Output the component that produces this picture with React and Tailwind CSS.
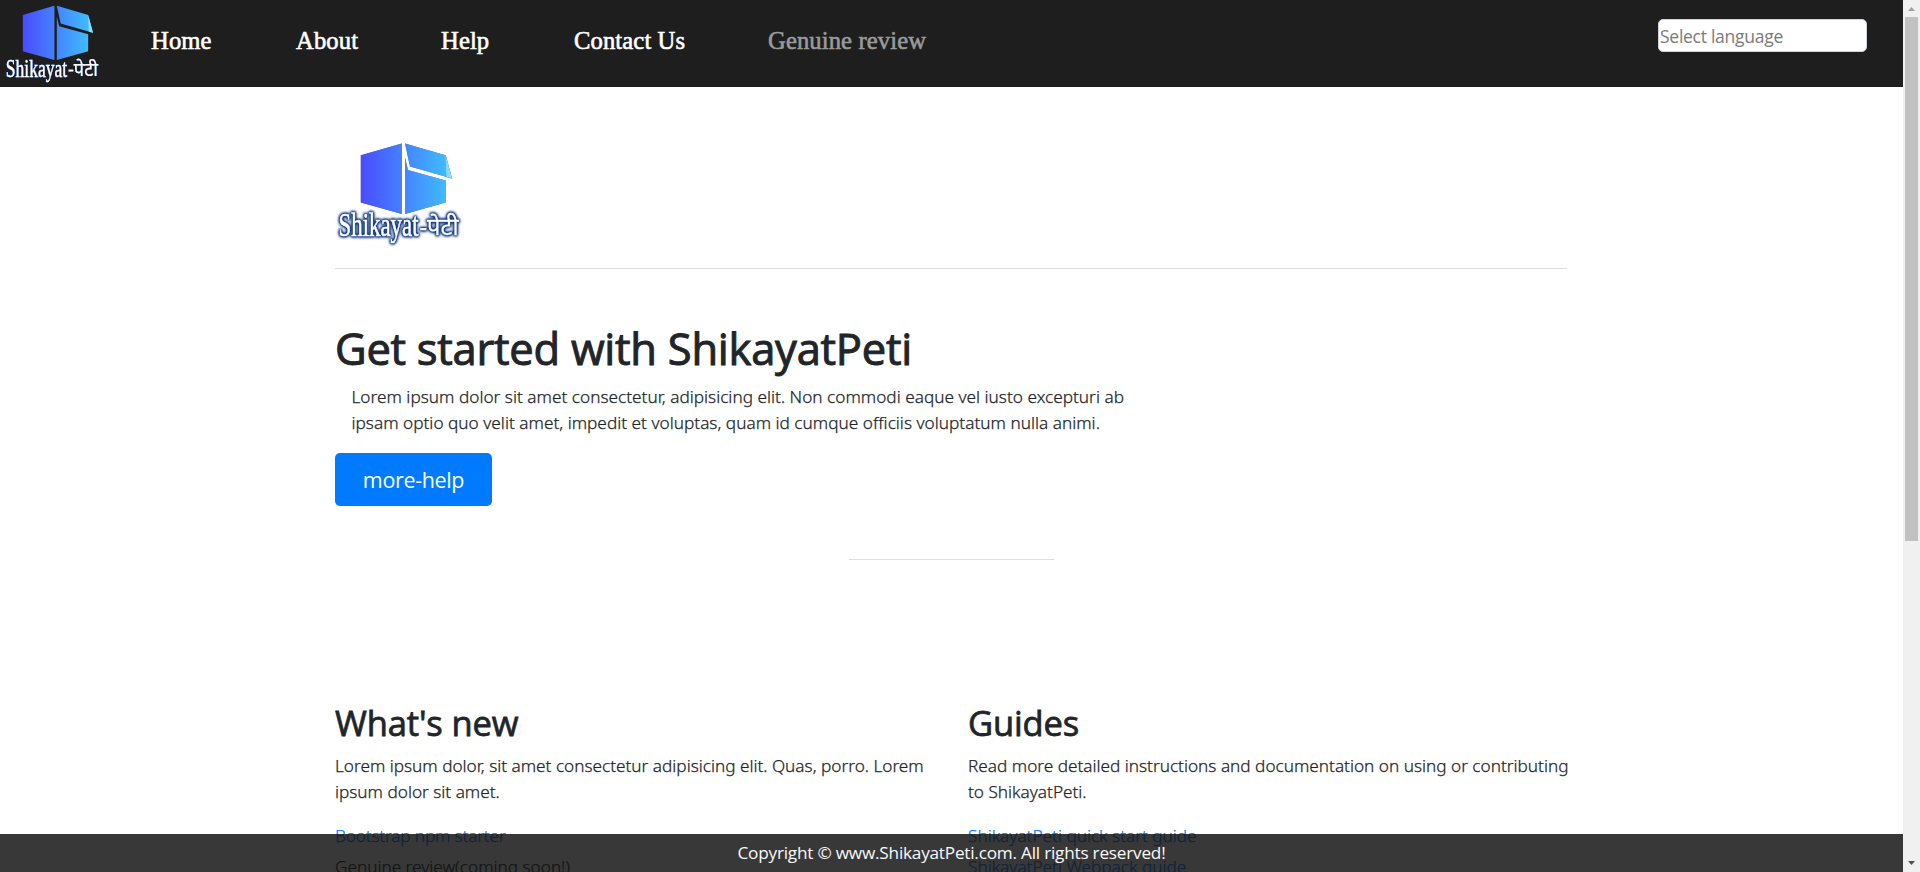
function Logo({ className, uid }) {
  return (
    <svg className={className} viewBox="0 0 130 110">
      <defs>
        <linearGradient id={uid} gradientUnits="userSpaceOnUse" x1="26" y1="0" x2="112" y2="0">
          <stop offset="0" stopColor="#4a4bff" />
          <stop offset="1" stopColor="#3fbcff" />
        </linearGradient>
      </defs>
      <g fill={`url(#${uid})`} className="[filter:drop-shadow(0_0_0.5px_rgba(60,60,60,0.7))]">
        <path d="M25.8 15.2 66.8 3.4V74L25.8 62.6Z" />
        <path d="M70 3.4 110.7 15.2 117 38.5 75 26.5Z" />
        <path d="M70 17.5 73 30 110.7 40.5V62.6L70 74Z" />
        <path d="M110.7 15.2 117 38.5 111.5 37Z" fill="#86dcff" />
      </g>
      <g
        fill="#fff"
        stroke="#fff"
        className="[filter:drop-shadow(0_0_0.8px_#0b2f78)_drop-shadow(0_0_0.8px_#0b2f78)_drop-shadow(0_0_1px_#0d3b86)]"
      >
        <text x="3.5" y="95.5" fontSize="33" strokeWidth="0.6" fontFamily="Liberation Serif, serif" textLength="80" lengthAdjust="spacingAndGlyphs">Shikayat</text>
        <text x="84.5" y="95" fontSize="24" strokeWidth="0.3" fontFamily="Noto Sans, sans-serif" textLength="39" lengthAdjust="spacingAndGlyphs">-पेटी</text>
      </g>
    </svg>
  );
}

function NavItem({ className, children }) {
  return (
    <a className={`shrink-0 whitespace-nowrap font-['Liberation_Serif',serif] text-[24.6px] leading-[30px] tracking-[0.12px] [-webkit-text-stroke:0.6px_currentColor] ${className}`}>
      {children}
    </a>
  );
}

function Navbar() {
  return (
    <header className="flex h-[87px] w-full items-start bg-[#1e1e1e] text-white">
      <Logo uid="navLogo" className="mt-[2.6px] ml-[3px] h-[85px] w-[100px] shrink-0" />
      <nav className="ml-[48px] flex pt-[26px]">
        <NavItem className="w-[145px]">Home</NavItem>
        <NavItem className="w-[145px]">About</NavItem>
        <NavItem className="w-[133px]">Help</NavItem>
        <NavItem className="w-[194px]">Contact Us</NavItem>
        <NavItem className="text-[#9a9a9a]">Genuine review</NavItem>
      </nav>
      <input
        placeholder="Select language"
        className="mt-[19px] mr-[36px] ml-auto h-[33px] w-[209px] rounded-[5px] border border-[#ced4da] bg-white px-px pt-px text-[17.5px] tracking-[-0.27px] placeholder:text-[#7b7b7b]"
      />
    </header>
  );
}

const BODY = "font-['Noto_Sans',sans-serif] text-[17.2px] leading-[26px] font-light [-webkit-text-stroke:0.25px_currentColor]";

function Guide({ className, title, lines, links }) {
  return (
    <section className={`shrink-0 whitespace-nowrap ${className}`}>
      <h2 className="-mt-px text-[34.5px] leading-[42px] tracking-[-0.15px] [-webkit-text-stroke:0.8px_currentColor]">{title}</h2>
      <div className={`mt-[9px] ${BODY}`}>
        {lines.map((line) => (
          <p key={line}>{line}</p>
        ))}
      </div>
      <ul className={`mt-[18px] flex flex-col gap-[5px] ${BODY}`}>
        {links.map((link) => (
          <li key={link.label} className={link.color}>
            {link.label}
          </li>
        ))}
      </ul>
    </section>
  );
}

function Scrollbar() {
  return (
    <div className="flex h-full w-[17px] shrink-0 flex-col items-center bg-[#f0f0f0]">
      <svg className="h-[17px] w-[17px] shrink-0" viewBox="0 0 17 17">
        <path d="M5 11 8.5 7 12 11Z" fill="#a0a0a0" />
      </svg>
      <div className="h-[524px] w-[13px] bg-[#c1c1c1]" />
      <svg className="mt-auto h-[17px] w-[17px] shrink-0" viewBox="0 0 17 17">
        <path d="M5 6H12L8.5 10Z" fill="#505050" />
      </svg>
    </div>
  );
}

export default function App() {
  return (
    <div className="flex h-[872px] w-full overflow-hidden bg-white font-['Open_Sans',sans-serif] text-[#212529]">
      <div className="relative h-full min-w-0 flex-1 overflow-hidden">
        <Navbar />
        <main className="ml-[335px] w-[1232px] pt-[53px]">
          <div className="h-[129px] border-b border-[#dcdfe2]">
            <Logo uid="pageLogo" className="h-[110px] w-[130px]" />
          </div>
          <h1 className="mt-[54px] text-[43.5px] leading-[52px] tracking-[-0.25px] whitespace-nowrap [-webkit-text-stroke:1px_currentColor]">
            Get started with ShikayatPeti
          </h1>
          <p className={`mt-[9px] ml-[16.5px] tracking-[0.02px] whitespace-nowrap ${BODY}`}>
            Lorem ipsum dolor sit amet consectetur, adipisicing elit. Non commodi eaque vel iusto excepturi ab
            <br />
            ipsam optio quo velit amet, impedit et voluptas, quam id cumque officiis voluptatum nulla animi.
          </p>
          <button className="mt-[17px] flex h-[53px] w-[157px] items-center justify-center rounded-[5px] bg-[#007bff] pt-[2px] text-[21.5px] tracking-[-0.35px] text-white">
            more-help
          </button>
          <hr className="mx-auto mt-[53px] w-[205px] border-[#dcdfe2]" />
          <div className="mt-[143px] flex">
            <Guide
              className="w-[633px]"
              title="What's new"
              lines={["Lorem ipsum dolor, sit amet consectetur adipisicing elit. Quas, porro. Lorem", "ipsum dolor sit amet."]}
              links={[
                { label: "Bootstrap npm starter", color: "text-[#007bff] tracking-[-0.15px]" },
                { label: "Genuine review(coming soon!)", color: "text-[#212529]" },
              ]}
            />
            <Guide
              className="w-[599px]"
              title="Guides"
              lines={["Read more detailed instructions and documentation on using or contributing", "to ShikayatPeti."]}
              links={[
                { label: "ShikayatPeti quick start guide", color: "text-[#007bff]" },
                { label: "ShikayatPeti Webpack guide", color: "text-[#007bff]" },
              ]}
            />
          </div>
        </main>
        <footer className="absolute inset-x-0 bottom-0 flex h-[38px] items-center justify-center bg-[rgba(18,18,18,0.84)] text-[17.2px] tracking-[-0.22px] text-[#f8f9fa]">
          Copyright © www.ShikayatPeti.com. All rights reserved!
        </footer>
      </div>
      <Scrollbar />
    </div>
  );
}
